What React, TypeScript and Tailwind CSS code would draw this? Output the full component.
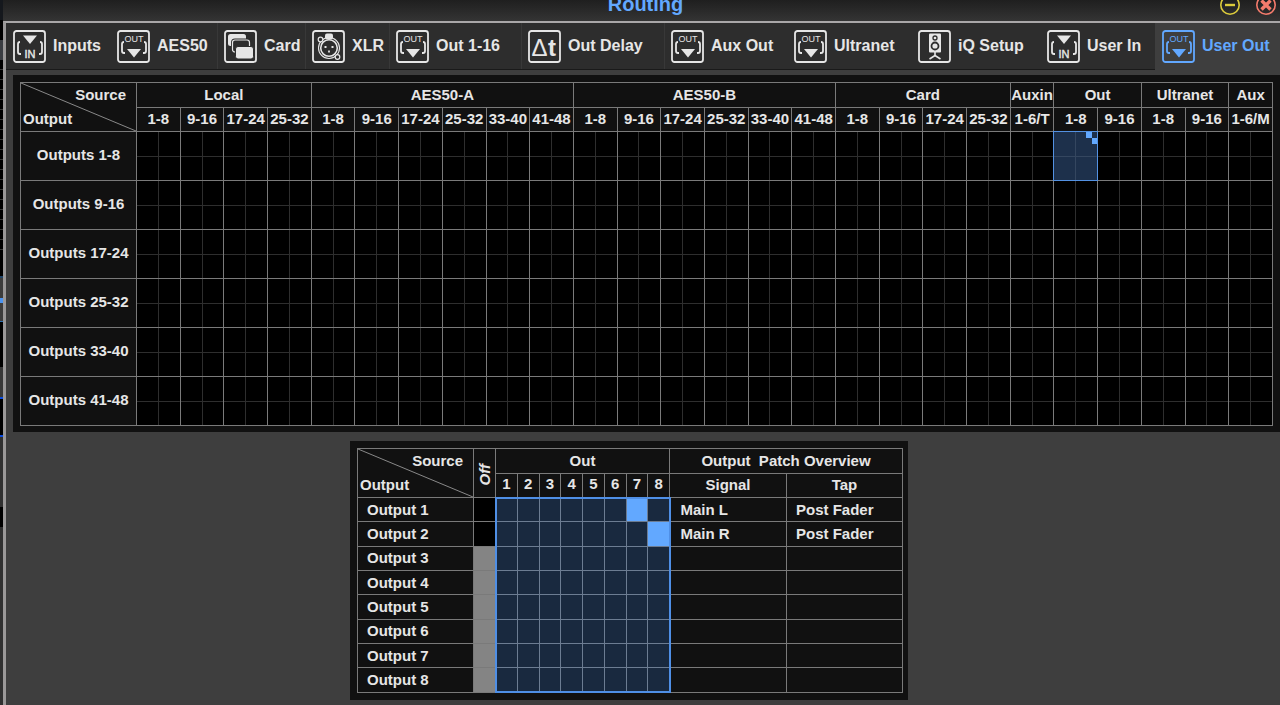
import type { ReactNode } from 'react'
import clsx from 'clsx'

type IconName = 'in' | 'out' | 'card' | 'xlr' | 'delay' | 'speaker'

const tabs: { label: string; icon: IconName; divider?: boolean }[] = [
  { label: 'Inputs', icon: 'in' },
  { label: 'AES50', icon: 'out' },
  { label: 'Card', icon: 'card', divider: true },
  { label: 'XLR', icon: 'xlr', divider: true },
  { label: 'Out 1-16', icon: 'out', divider: true },
  { label: 'Out Delay', icon: 'delay', divider: true },
  { label: 'Aux Out', icon: 'out', divider: true },
  { label: 'Ultranet', icon: 'out' },
  { label: 'iQ Setup', icon: 'speaker' },
  { label: 'User In', icon: 'in' },
  { label: 'User Out', icon: 'out' },
]
const activeTab = 'User Out'

const sources = [
  { name: 'Local', blocks: ['1-8', '9-16', '17-24', '25-32'] },
  { name: 'AES50-A', blocks: ['1-8', '9-16', '17-24', '25-32', '33-40', '41-48'] },
  { name: 'AES50-B', blocks: ['1-8', '9-16', '17-24', '25-32', '33-40', '41-48'] },
  { name: 'Card', blocks: ['1-8', '9-16', '17-24', '25-32'] },
  { name: 'Auxin', blocks: ['1-6/T'] },
  { name: 'Out', blocks: ['1-8', '9-16'] },
  { name: 'Ultranet', blocks: ['1-8', '9-16'] },
  { name: 'Aux', blocks: ['1-6/M'] },
]
const columns = sources.flatMap((s) => s.blocks.map((block) => ({ source: s.name, block })))
const outputBlocks = ['1-8', '9-16', '17-24', '25-32', '33-40', '41-48']

const channels = [1, 2, 3, 4, 5, 6, 7, 8]
const patches = [
  { output: 1, channel: 7, signal: 'Main L', tap: 'Post Fader' },
  { output: 2, channel: 8, signal: 'Main R', tap: 'Post Fader' },
  { output: 3 },
  { output: 4 },
  { output: 5 },
  { output: 6 },
  { output: 7 },
  { output: 8 },
]

const line = 'border border-[#7a7a7a] p-0 font-bold'

const glyphs: Record<IconName, ReactNode> = {
  in: (
    <>
      <path d="M10 5.5h14l-7 8.5z" fill="currentColor" />
      <path d="M7 12Q5 12 5 14v8q0 2 2 2h1M27 12q2 0 2 2v8q0 2-2 2h-1" strokeWidth="1.8" />
      <text x="17" y="27.5" fontSize="11" textAnchor="middle" fill="currentColor" stroke="currentColor" strokeWidth="0.4">
        IN
      </text>
    </>
  ),
  out: (
    <>
      <text x="17" y="11.5" fontSize="9" textAnchor="middle" fill="currentColor">
        OUT
      </text>
      <path d="M7 12q-2 0-2 2v7q0 2 2 2h1M27 12q2 0 2 2v7q0 2-2 2h-1" strokeWidth="1.8" />
      <path d="M10 19h14l-7 8.5z" fill="currentColor" />
    </>
  ),
  card: (
    <>
      <rect x="4" y="4" width="18" height="12" rx="2.5" fill="currentColor" />
      <rect x="8.5" y="10" width="17" height="12" rx="2.5" fill="#2d2d2d" stroke="#2d2d2d" strokeWidth="3" />
      <rect x="8.5" y="10" width="17" height="12" rx="2.5" strokeWidth="1.2" />
      <rect x="11.5" y="16.5" width="18" height="12.5" rx="2.5" fill="currentColor" stroke="#2d2d2d" />
    </>
  ),
  xlr: (
    <>
      <rect x="13" y="3.5" width="8" height="6" rx="2" fill="currentColor" />
      <circle cx="17" cy="18" r="10.5" strokeWidth="1.1" />
      <circle cx="17" cy="18" r="8.3" strokeWidth="1.6" />
      <circle cx="8.5" cy="9.5" r="2.3" strokeWidth="1.2" fill="#2d2d2d" />
      <circle cx="25.5" cy="27" r="2.3" strokeWidth="1.2" fill="#2d2d2d" />
      <path d="M12.5 17h2M19.5 17h2M17 20.5v2" strokeWidth="1.8" />
    </>
  ),
  delay: (
    <>
      <text x="3.5" y="25.5" fontSize="24" fill="currentColor">
        Δ
      </text>
      <text x="20" y="25.5" fontSize="24" fontWeight="bold" fill="currentColor">
        t
      </text>
    </>
  ),
  speaker: (
    <>
      <rect x="11" y="3.5" width="12" height="19" rx="1" fill="currentColor" />
      <circle cx="17" cy="8" r="2" stroke="#2d2d2d" strokeWidth="1.3" />
      <circle cx="17" cy="16" r="3.5" stroke="#2d2d2d" strokeWidth="1.8" />
      <path d="M17 22v4M17 25.5L11.5 29M17 25.5l5.5 3.5" strokeWidth="1.6" />
    </>
  ),
}

function TabIcon({ name }: { name: IconName }) {
  return (
    <svg viewBox="0 0 33 33" className="size-[33px] shrink-0" fill="none" aria-hidden="true">
      <rect x="1" y="1" width="31" height="31" rx="2.5" stroke="currentColor" strokeWidth="1.8" />
      <g className="font-normal [&>circle:not([stroke])]:stroke-current [&>path:not([fill])]:stroke-current [&>rect:not([fill])]:stroke-current">
        {glyphs[name]}
      </g>
    </svg>
  )
}

function TitleBar() {
  return (
    <header className="grid h-[21px] grid-cols-[1fr_auto_1fr] content-end overflow-hidden bg-linear-to-b from-[#1f1f1f] to-[#343434] pr-1 pb-[6px] pl-3">
      <h1 className="col-start-2 text-xl leading-[22px] font-bold text-[#62a8ff]">Routing</h1>
      <div className="flex items-end justify-end gap-4">
        <button type="button" aria-label="Minimize" className="text-[#dccb3c]">
          <svg viewBox="0 0 20 20" className="size-5" fill="none" stroke="currentColor">
            <circle cx="10" cy="10" r="9.2" strokeWidth="1.6" />
            <path d="M5 10h10" strokeWidth="2.4" />
          </svg>
        </button>
        <button type="button" aria-label="Close" className="text-[#f47b6c]">
          <svg viewBox="0 0 20 20" className="size-5" fill="none" stroke="currentColor">
            <circle cx="10" cy="10" r="9.2" strokeWidth="1.6" />
            <path d="M5.5 5.5l9 9M14.5 5.5l-9 9" strokeWidth="3.4" />
          </svg>
        </button>
      </div>
    </header>
  )
}

function TabBar() {
  return (
    <nav
      className="grid h-[47px] grid-cols-[104fr_107fr_88fr_84fr_132fr_143fr_123fr_124fr_129fr_115fr_125fr]"
      aria-label="Routing pages"
    >
      {tabs.map((tab) => (
        <button
          key={tab.label}
          type="button"
          aria-pressed={tab.label === activeTab}
          className={clsx(
            'flex items-center gap-[7px] border-b pl-[7px] text-left text-base font-bold whitespace-nowrap',
            tab.label === activeTab
              ? 'border-[#3e3e3e] bg-[#3e3e3e] text-[#62a8ff]'
              : 'border-[#1a1a1a] bg-[#2d2d2d] text-[#e6e6e6]',
            tab.divider && 'shadow-[inset_1px_0_0_#383838]',
          )}
        >
          <TabIcon name={tab.icon} />
          {tab.label}
        </button>
      ))}
    </nav>
  )
}

function CornerCell() {
  return (
    <th rowSpan={2} className={line}>
      <div className="relative flex h-12 flex-col leading-6">
        <svg
          viewBox="0 0 100 100"
          preserveAspectRatio="none"
          className="absolute inset-0 size-full"
          stroke="#8a8a8a"
          aria-hidden="true"
        >
          <path d="M0 0L100 100" vectorEffect="non-scaling-stroke" />
        </svg>
        <span className="pr-[10px] text-right">Source</span>
        <span className="pl-[2px] text-left">Output</span>
      </div>
    </th>
  )
}

function BlockMatrix() {
  return (
    <table className="h-[343px] w-full table-fixed border-collapse text-center">
      <colgroup>
        <col className="w-[116px]" />
        {columns.map((c) => (
          <col key={c.source + c.block} />
        ))}
      </colgroup>
      <thead>
        <tr className="h-[25px]">
          <CornerCell />
          {sources.map((s) => (
            <th key={s.name} colSpan={s.blocks.length} className={line}>
              {s.name}
            </th>
          ))}
        </tr>
        <tr className="h-6">
          {columns.map((c) => (
            <th key={c.source + c.block} className={clsx(line, 'pb-[2px] leading-5 whitespace-nowrap')}>
              {c.block}
            </th>
          ))}
        </tr>
      </thead>
      <tbody>
        {outputBlocks.map((out) => (
          <tr key={out} className="h-[49px]">
            <th scope="row" className={clsx(line, 'pb-[2px]')}>
              Outputs {out}
            </th>
            {columns.map((c) => {
              const selected = out === '1-8' && c.source === 'Out' && c.block === '1-8'
              return (
                <td key={c.source + c.block} className={line}>
                  <button
                    type="button"
                    aria-label={`${c.source} ${c.block} to outputs ${out}`}
                    aria-pressed={selected}
                    className={clsx(
                      'relative grid h-12 w-full grid-cols-8 grid-rows-8 bg-[length:1px_100%,100%_1px] bg-center bg-no-repeat',
                      selected
                        ? 'bg-[#1d304b] bg-[linear-gradient(#34465f,#34465f),linear-gradient(#34465f,#34465f)] outline outline-[#5391e2]'
                        : 'bg-black bg-[linear-gradient(#2e2e2e,#2e2e2e),linear-gradient(#2e2e2e,#2e2e2e)]',
                    )}
                  >
                    {selected && (
                      <>
                        <span className="col-start-7 row-start-1 h-full bg-[#62a8ff]" />
                        <span className="col-start-8 row-start-2 h-full bg-[#62a8ff]" />
                      </>
                    )}
                  </button>
                </td>
              )
            })}
          </tr>
        ))}
      </tbody>
    </table>
  )
}

function PatchTable() {
  return (
    <table className="h-[245px] w-[546px] table-fixed border-collapse text-center">
      <colgroup>
        <col className="w-[116px]" />
        <col className="w-[22px]" />
        {channels.map((ch) => (
          <col key={ch} />
        ))}
        <col className="w-[117px]" />
        <col className="w-[116px]" />
      </colgroup>
      <thead>
        <tr className="h-[25px]">
          <CornerCell />
          <th rowSpan={2} className={clsx(line, 'align-bottom')}>
            <span className="inline-block rotate-180 pt-[6px] leading-5 italic [writing-mode:vertical-rl]">Off</span>
          </th>
          <th colSpan={8} className={line}>
            Out
          </th>
          <th colSpan={2} className={clsx(line, 'whitespace-pre')}>
            {'Output  Patch Overview'}
          </th>
        </tr>
        <tr className="h-6">
          {channels.map((ch) => (
            <th key={ch} className={clsx(line, 'pb-[2px] leading-5')}>
              {ch}
            </th>
          ))}
          <th className={clsx(line, 'pb-[2px] leading-5')}>Signal</th>
          <th className={clsx(line, 'pb-[2px] leading-5')}>Tap</th>
        </tr>
      </thead>
      <tbody>
        {patches.map((p) => (
          <tr key={p.output} className="h-6">
            <th scope="row" className={clsx(line, 'pl-[9px] text-left leading-5')}>
              Output {p.output}
            </th>
            <td className={clsx(line, p.signal ? 'bg-black' : 'bg-[#848484]')}>
              <button type="button" aria-label={`Output ${p.output} off`} className="block h-[22px] w-full" />
            </td>
            {channels.map((ch) => (
              <td
                key={ch}
                className={clsx(
                  'border border-[#6c7c92] p-0',
                  ch === 1 && 'border-l-2 border-l-[#4f8fe6]',
                  ch === 8 && 'border-r-2 border-r-[#4f8fe6]',
                  p.output === 1 && 'border-t-2 border-t-[#4f8fe6]',
                  p.output === 8 && 'border-b-2 border-b-[#4f8fe6]',
                  p.channel === ch ? 'bg-[#62a8ff]' : 'bg-[#19293f]',
                )}
              >
                <button
                  type="button"
                  aria-label={`Out ${ch} to output ${p.output}`}
                  aria-pressed={p.channel === ch}
                  className="block h-[22px] w-full"
                />
              </td>
            ))}
            <td className={clsx(line, 'pl-[10px] text-left leading-5')}>{p.signal}</td>
            <td className={clsx(line, 'pl-[9px] text-left leading-5')}>{p.tap}</td>
          </tr>
        ))}
      </tbody>
    </table>
  )
}

// Sliver of the mixer window that stays visible behind this one
function MixerEdge() {
  return (
    <div className="flex w-[3px] shrink-0 flex-col bg-black" aria-hidden="true">
      <div className="h-5 bg-[#15181d]" />
      <div className="mt-5 h-5 bg-[#3a3d42]" />
      <div className="h-[190px] bg-[repeating-linear-gradient(#000_0_9px,#3a3a3a_9px_10px)]" />
      <div className="mt-[26px] h-[2px] bg-[#1f4468]" />
      <div className="h-[20px] bg-[#3c3c3c]" />
      <div className="h-[5px] bg-[#4d94f0]" />
      <div className="h-[18px] bg-[#3c3c3c]" />
      <div className="h-px bg-[#2f6fae]" />
      <div className="mt-[45px] h-[30px] bg-[#383838]" />
      <div className="h-[2px] bg-[#0a4be0]" />
      <div className="mt-9 h-[2px] bg-[#0a4be0]" />
      <div className="h-[70px] bg-[#303030]" />
      <div className="mt-5 grow bg-[#303030]" />
    </div>
  )
}

export default function App() {
  return (
    <div className="flex min-h-screen bg-[#3e3e3e] font-['Liberation_Sans',Arial,sans-serif] text-[15px] leading-[22px] text-[#e6e6e6]">
      <MixerEdge />
      <div className="flex min-w-0 grow flex-col">
        <TitleBar />
        <div className="grow border-t-2 border-l-[3px] border-t-[#a9a7a8] border-l-[#9a9898]">
          <TabBar />
          <main className="flex flex-col gap-[9px] pt-[5px]">
            <section className="ml-[7px] bg-[#111] px-[7px] pt-[7px] pb-[6px]" aria-label="Output blocks">
              <BlockMatrix />
            </section>
            <section className="flex justify-center pr-7" aria-label="Output patch">
              <div className="bg-[#111] py-[7px] pr-[5px] pl-[7px]">
                <PatchTable />
              </div>
            </section>
          </main>
        </div>
      </div>
    </div>
  )
}
